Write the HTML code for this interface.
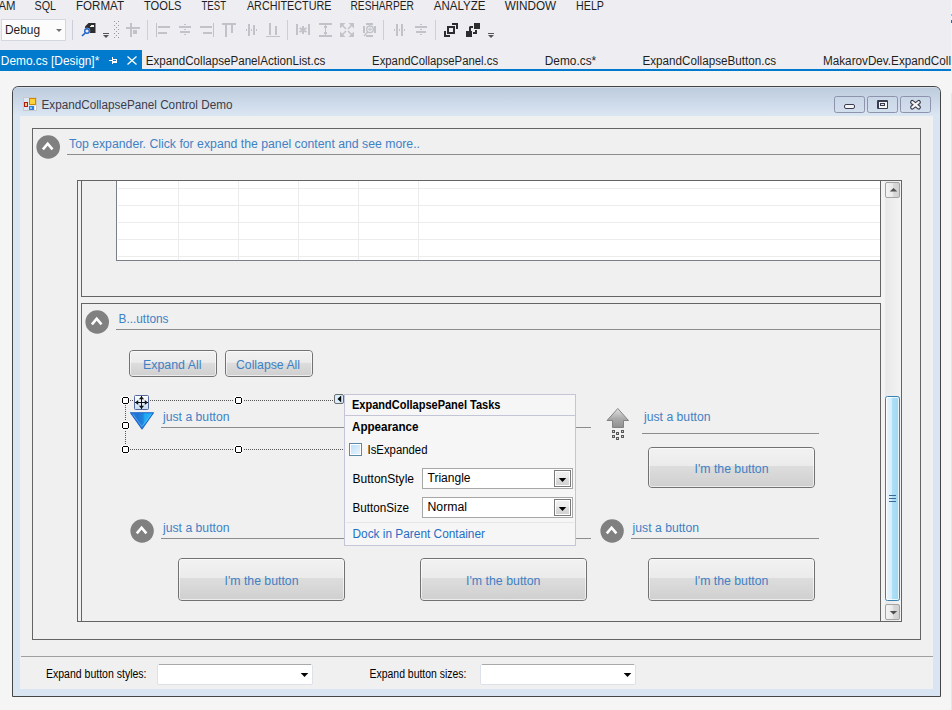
<!DOCTYPE html><html><head><meta charset="utf-8"><title>ExpandCollapsePanel Designer</title><style>html,body{margin:0;padding:0;width:952px;height:710px;overflow:hidden;background:#f5f5f5;font-family:"Liberation Sans",sans-serif}rect{shape-rendering:crispEdges}rect[rx]{shape-rendering:geometricPrecision}</style></head><body><svg width="952" height="710" viewBox="0 0 952 710" style="position:absolute;left:0;top:0;display:block" shape-rendering="auto"><defs><linearGradient id="title" x1="0" y1="0" x2="0" y2="1"><stop offset="0" stop-color="#bccbdd"/><stop offset="1" stop-color="#dbe6f3"/></linearGradient><linearGradient id="capbtn" x1="0" y1="0" x2="0" y2="1"><stop offset="0" stop-color="#c9d6e5"/><stop offset="1" stop-color="#d3dfed"/></linearGradient><linearGradient id="track" x1="0" y1="0" x2="1" y2="0"><stop offset="0" stop-color="#e9e9e9"/><stop offset="1" stop-color="#f2f2f2"/></linearGradient><linearGradient id="sbtn" x1="0" y1="0" x2="1" y2="0"><stop offset="0" stop-color="#f4f4f4"/><stop offset="0.5" stop-color="#e9e9e9"/><stop offset="0.55" stop-color="#d9d9d9"/><stop offset="1" stop-color="#d0d0d0"/></linearGradient><linearGradient id="thumb" x1="0" y1="0" x2="1" y2="0"><stop offset="0" stop-color="#ecf7fd"/><stop offset="0.45" stop-color="#d6edfb"/><stop offset="0.5" stop-color="#ade0f8"/><stop offset="1" stop-color="#9fd6f3"/></linearGradient><linearGradient id="btn" x1="0" y1="0" x2="0" y2="1"><stop offset="0" stop-color="#f2f2f2"/><stop offset="0.46" stop-color="#ebebeb"/><stop offset="0.47" stop-color="#dddddd"/><stop offset="1" stop-color="#cfcfcf"/></linearGradient><linearGradient id="mv" x1="0" y1="0" x2="0" y2="1"><stop offset="0" stop-color="#ffffff"/><stop offset="1" stop-color="#c6dcf2"/></linearGradient><linearGradient id="tri" x1="0" y1="0" x2="1" y2="0"><stop offset="0" stop-color="#2a86dc"/><stop offset="0.3" stop-color="#1f72d4"/><stop offset="0.55" stop-color="#2087de"/><stop offset="0.62" stop-color="#1eaaf4"/><stop offset="1" stop-color="#22b4f8"/></linearGradient><linearGradient id="arr" x1="0" y1="0" x2="1" y2="0"><stop offset="0" stop-color="#d0d0d0"/><stop offset="0.5" stop-color="#a8a8a8"/><stop offset="1" stop-color="#8a8a8a"/></linearGradient><linearGradient id="arrv" x1="0" y1="0" x2="0" y2="1"><stop offset="0" stop-color="#e2e2e2"/><stop offset="0.55" stop-color="#a9a9a9"/><stop offset="1" stop-color="#8f8f8f"/></linearGradient><linearGradient id="chk" x1="0" y1="0" x2="1" y2="1"><stop offset="0" stop-color="#bfe0f8"/><stop offset="1" stop-color="#e6f4fc"/></linearGradient><linearGradient id="dd" x1="0" y1="0" x2="0" y2="1"><stop offset="0" stop-color="#f0f0f0"/><stop offset="0.45" stop-color="#ebebeb"/><stop offset="0.5" stop-color="#dedede"/><stop offset="1" stop-color="#d2d2d2"/></linearGradient></defs><rect x="0" y="0" width="952" height="71" fill="#eeeef2" />
<rect x="0" y="71" width="952" height="639" fill="#f5f5f5" />
<text x="-1.5" y="10" font-family="Liberation Sans" font-size="12" fill="#1e1e1e" font-weight="normal" textLength="17" lengthAdjust="spacingAndGlyphs" >AM</text>
<text x="34.5" y="10" font-family="Liberation Sans" font-size="12" fill="#1e1e1e" font-weight="normal" textLength="21.5" lengthAdjust="spacingAndGlyphs" >SQL</text>
<text x="76.0" y="10" font-family="Liberation Sans" font-size="12" fill="#1e1e1e" font-weight="normal" textLength="48.0" lengthAdjust="spacingAndGlyphs" >FORMAT</text>
<text x="144.0" y="10" font-family="Liberation Sans" font-size="12" fill="#1e1e1e" font-weight="normal" textLength="37.5" lengthAdjust="spacingAndGlyphs" >TOOLS</text>
<text x="201.5" y="10" font-family="Liberation Sans" font-size="12" fill="#1e1e1e" font-weight="normal" textLength="24.5" lengthAdjust="spacingAndGlyphs" >TEST</text>
<text x="246.9" y="10" font-family="Liberation Sans" font-size="12" fill="#1e1e1e" font-weight="normal" textLength="84.6" lengthAdjust="spacingAndGlyphs" >ARCHITECTURE</text>
<text x="350.5" y="10" font-family="Liberation Sans" font-size="12" fill="#1e1e1e" font-weight="normal" textLength="63.3" lengthAdjust="spacingAndGlyphs" >RESHARPER</text>
<text x="433.8" y="10" font-family="Liberation Sans" font-size="12" fill="#1e1e1e" font-weight="normal" textLength="51.7" lengthAdjust="spacingAndGlyphs" >ANALYZE</text>
<text x="504.7" y="10" font-family="Liberation Sans" font-size="12" fill="#1e1e1e" font-weight="normal" textLength="51.4" lengthAdjust="spacingAndGlyphs" >WINDOW</text>
<text x="576.1" y="10" font-family="Liberation Sans" font-size="12" fill="#1e1e1e" font-weight="normal" textLength="27.9" lengthAdjust="spacingAndGlyphs" >HELP</text>
<rect x="1" y="19" width="65" height="22" fill="#d5d7e0" />
<rect x="2" y="20" width="63" height="20" fill="#fcfcfc" />
<text x="5" y="34" font-family="Liberation Sans" font-size="12.5" fill="#1e1e1e" font-weight="normal" textLength="35" lengthAdjust="spacingAndGlyphs" >Debug</text>
<polygon points="56,29 62,29 59,32" fill="#717171"/>
<rect x="72" y="20" width="1" height="20" fill="#ccceDB" />
<rect x="147" y="20" width="1" height="20" fill="#ccceDB" />
<rect x="287" y="20" width="1" height="20" fill="#ccceDB" />
<rect x="383" y="20" width="1" height="20" fill="#ccceDB" />
<rect x="435" y="20" width="1" height="20" fill="#ccceDB" />
<path d="M85,26.5 L88.5,23 H95.5 V33 H85 Z" fill="#2d2d30"/>
<rect x="91" y="25" width="3" height="1.5" fill="#eeeef2"/><rect x="90" y="25.5" width="1" height="1" fill="#eeeef2"/>
<circle cx="87" cy="31" r="3.2" fill="#eeeef2"/>
<circle cx="87" cy="31" r="2.3" fill="none" stroke="#1e62c8" stroke-width="1.4"/>
<line x1="85.2" y1="33" x2="82" y2="36" stroke="#1e62c8" stroke-width="1.7"/>
<rect x="103" y="33" width="6" height="1" fill="#555" />
<polygon points="103,35 109,35 106,38" fill="#555"/>
<rect x="488" y="33" width="6" height="1" fill="#555" />
<polygon points="488,35 494,35 491,38" fill="#555"/>
<rect x="114" y="21" width="1" height="1" fill="#999" />
<rect x="118" y="21" width="1" height="1" fill="#999" />
<rect x="114" y="25" width="1" height="1" fill="#999" />
<rect x="118" y="25" width="1" height="1" fill="#999" />
<rect x="114" y="29" width="1" height="1" fill="#999" />
<rect x="118" y="29" width="1" height="1" fill="#999" />
<rect x="114" y="33" width="1" height="1" fill="#999" />
<rect x="118" y="33" width="1" height="1" fill="#999" />
<rect x="114" y="37" width="1" height="1" fill="#999" />
<rect x="118" y="37" width="1" height="1" fill="#999" />
<rect x="116" y="23" width="1" height="1" fill="#999" />
<rect x="116" y="27" width="1" height="1" fill="#999" />
<rect x="116" y="31" width="1" height="1" fill="#999" />
<rect x="116" y="35" width="1" height="1" fill="#999" />
<rect x="126" y="27" width="14" height="2" fill="#c2c3c9" />
<rect x="130" y="23" width="2" height="14" fill="#c2c3c9" />
<rect x="133" y="30" width="4" height="4" fill="#c2c3c9" />
<rect x="156" y="23" width="1" height="14" fill="#c2c3c9" />
<rect x="158" y="26" width="12" height="2" fill="#c2c3c9" />
<rect x="158" y="32" width="9" height="2" fill="#c2c3c9" />
<rect x="179" y="26" width="12" height="2" fill="#c2c3c9" />
<rect x="180" y="31" width="10" height="2" fill="#c2c3c9" />
<rect x="184" y="24" width="2" height="1" fill="#c2c3c9" />
<rect x="184" y="29" width="2" height="1" fill="#c2c3c9" />
<rect x="184" y="34" width="2" height="1" fill="#c2c3c9" />
<rect x="200" y="26" width="12" height="2" fill="#c2c3c9" />
<rect x="203" y="32" width="9" height="2" fill="#c2c3c9" />
<rect x="213" y="23" width="1" height="14" fill="#c2c3c9" />
<rect x="222" y="23" width="14" height="2" fill="#c2c3c9" />
<rect x="225" y="25" width="2" height="12" fill="#c2c3c9" />
<rect x="231" y="25" width="2" height="8" fill="#c2c3c9" />
<rect x="248" y="24" width="2" height="12" fill="#c2c3c9" />
<rect x="253" y="25" width="2" height="10" fill="#c2c3c9" />
<rect x="246" y="29" width="1" height="2" fill="#c2c3c9" />
<rect x="251" y="29" width="1" height="2" fill="#c2c3c9" />
<rect x="256" y="29" width="1" height="2" fill="#c2c3c9" />
<rect x="266" y="36" width="14" height="1" fill="#c2c3c9" />
<rect x="269" y="23" width="2" height="12" fill="#c2c3c9" />
<rect x="275" y="26" width="2" height="9" fill="#c2c3c9" />
<rect x="296" y="24" width="2" height="11" fill="#c2c3c9" />
<rect x="308" y="24" width="2" height="11" fill="#c2c3c9" />
<path d="M303,26 V34 M299.5,28 L306.5,32 M306.5,28 L299.5,32" stroke="#c2c3c9" stroke-width="2"/>
<rect x="319" y="23" width="13" height="2" fill="#c2c3c9" />
<rect x="319" y="35" width="13" height="2" fill="#c2c3c9" />
<rect x="325" y="25" width="1" height="10" fill="#c2c3c9" />
<rect x="324" y="26" width="3" height="2" fill="#c2c3c9" />
<rect x="324" y="32" width="3" height="2" fill="#c2c3c9" />
<path d="M342,25 L346,29 M348,31 L352,35 M352,25 L348,29 M346,31 L342,35" stroke="#c2c3c9" stroke-width="1.6"/>
<path d="M340,23 h5.5 l-5.5,5.5 z M354,23 h-5.5 l5.5,5.5 z M340,37 h5.5 l-5.5,-5.5 z M354,37 h-5.5 l5.5,-5.5 z" fill="#c2c3c9"/>
<rect x="366" y="23" width="7" height="2" fill="#c2c3c9" />
<rect x="366" y="35" width="7" height="2" fill="#c2c3c9" />
<rect x="363" y="26" width="2" height="7" fill="#c2c3c9" />
<rect x="374" y="26" width="2" height="7" fill="#c2c3c9" />
<circle cx="370" cy="29.3" r="3.3" fill="none" stroke="#c2c3c9" stroke-width="1.4"/>
<path d="M370,27.3 V31.3 M368,29.3 H372" stroke="#c2c3c9" stroke-width="1"/>
<line x1="367.6" y1="32" x2="364" y2="36" stroke="#c2c3c9" stroke-width="1.3"/>
<rect x="396" y="24" width="2" height="12" fill="#c2c3c9" />
<rect x="401" y="24" width="2" height="12" fill="#c2c3c9" />
<rect x="394" y="29" width="1" height="2" fill="#c2c3c9" />
<rect x="399" y="29" width="1" height="2" fill="#c2c3c9" />
<rect x="404" y="29" width="1" height="2" fill="#c2c3c9" />
<rect x="415" y="26" width="12" height="2" fill="#c2c3c9" />
<rect x="416" y="31" width="10" height="2" fill="#c2c3c9" />
<rect x="420" y="24" width="2" height="1" fill="#c2c3c9" />
<rect x="420" y="29" width="2" height="1" fill="#c2c3c9" />
<rect x="420" y="34" width="2" height="1" fill="#c2c3c9" />
<path d="M447,26 h8 v8 h-8 z M449,28 v4 h4 v-4 z" fill="#2d2d30" fill-rule="evenodd"/>
<path d="M452,23 h6 v6 h-2 v-4 h-4 z M444,31 h2 v4 h4 v2 h-6 z" fill="#2d2d30"/>
<path d="M474,23 h6 v6 h-6 z M466,31 h6 v6 h-6 z" fill="#2d2d30"/>
<path d="M470,26 h3 v2 h-2 v3 h-2 v-4 z M475,30 h2 v4 h-4 v-2 h2 z" fill="#2d2d30"/>
<rect x="0" y="69" width="951" height="2" fill="#007acc" />
<rect x="0" y="50" width="142" height="21" fill="#007acc" />
<text x="0.8" y="65" font-family="Liberation Sans" font-size="12.5" fill="#ffffff" font-weight="normal" textLength="98.5" lengthAdjust="spacingAndGlyphs" >Demo.cs [Design]*</text>
<rect x="109" y="60" width="4" height="1" fill="#fff" />
<rect x="112" y="57" width="1" height="7" fill="#fff" />
<rect x="112" y="59" width="5" height="1" fill="#fff" />
<rect x="112" y="61" width="5" height="2" fill="#fff" />
<rect x="116" y="59" width="1" height="4" fill="#fff" />
<path d="M127.5,56.5 L136.5,64.5 M136.5,56.5 L127.5,64.5" stroke="#fff" stroke-width="1.3"/>
<text x="145.8" y="65" font-family="Liberation Sans" font-size="12.5" fill="#1e1e1e" font-weight="normal" textLength="179.6" lengthAdjust="spacingAndGlyphs" >ExpandCollapsePanelActionList.cs</text>
<text x="372.1" y="65" font-family="Liberation Sans" font-size="12.5" fill="#1e1e1e" font-weight="normal" textLength="126.0" lengthAdjust="spacingAndGlyphs" >ExpandCollapsePanel.cs</text>
<text x="544.8" y="65" font-family="Liberation Sans" font-size="12.5" fill="#1e1e1e" font-weight="normal" textLength="51.4" lengthAdjust="spacingAndGlyphs" >Demo.cs*</text>
<text x="642.5" y="65" font-family="Liberation Sans" font-size="12.5" fill="#1e1e1e" font-weight="normal" textLength="133.6" lengthAdjust="spacingAndGlyphs" >ExpandCollapseButton.cs</text>
<text x="823" y="65" font-family="Liberation Sans" font-size="12.5" fill="#1e1e1e" font-weight="normal" textLength="128" lengthAdjust="spacingAndGlyphs" >MakarovDev.ExpandColl</text>
<rect x="951" y="93" width="1" height="617" fill="#e6e6e6" />
<rect x="951" y="0" width="1" height="69" fill="#f3f3f6" />
<rect x="951" y="14" width="1" height="2" fill="#7cc6f2" />
<rect x="951" y="20" width="1" height="3" fill="#0a72c8" />
<path d="M12.5,696.5 V93 Q12.5,86.5 19,86.5 H934 Q940.5,86.5 940.5,93 V696.5 Z" fill="#d9e5f3" stroke="#454545" stroke-width="1"/>
<path d="M13,116 V93 Q13,87 19,87 H934 Q940,87 940,93 V116 Z" fill="url(#title)"/>
<rect x="18" y="87" width="917" height="1" fill="#d3dde8" />
<rect x="13" y="116" width="927" height="580" fill="#d9e5f3" />
<rect x="20" y="116" width="913" height="573" fill="#f0f0f0" />
<rect x="23" y="97" width="14" height="14" fill="#c9c9c9" />
<rect x="24" y="98" width="12" height="12" fill="#dfe8f2" />
<rect x="23" y="103" width="1" height="1" fill="#c9c9c9" />
<rect x="24" y="102" width="4" height="5" fill="#b8180e" />
<rect x="25" y="103" width="2" height="3" fill="#f0c890" />
<rect x="29" y="98" width="7" height="7" fill="#c98a00" />
<rect x="30" y="99" width="5" height="5" fill="#ffd23a" />
<rect x="29" y="106" width="5" height="4" fill="#2f7fdc" />
<rect x="30" y="107" width="2" height="2" fill="#8ec0f5" />
<rect x="35" y="106" width="1" height="4" fill="#ffffff" />
<text x="41.5" y="109" font-family="Liberation Sans" font-size="12.5" fill="#3c3c4a" font-weight="normal" textLength="191" lengthAdjust="spacingAndGlyphs" >ExpandCollapsePanel Control Demo</text>
<rect x="834.5" y="96.5" width="30" height="16" rx="2" fill="url(#capbtn)" stroke="#8d92ad" stroke-width="1"/>
<rect x="867.5" y="96.5" width="30" height="16" rx="2" fill="url(#capbtn)" stroke="#8d92ad" stroke-width="1"/>
<rect x="900.5" y="96.5" width="30" height="16" rx="2" fill="url(#capbtn)" stroke="#8d92ad" stroke-width="1"/>
<rect x="844.5" y="104.5" width="10" height="4" rx="1.5" fill="#f4f4f4" stroke="#3c3c50" stroke-width="1"/>
<rect x="877" y="100" width="11" height="9" rx="1" fill="#3c3c50"/><rect x="878.5" y="101.5" width="8" height="6" fill="#f4f4f4"/>
<rect x="880" y="103" width="5" height="3" fill="#3c3c50"/><rect x="881" y="104" width="3" height="1" fill="#dfe6ee"/>
<path d="M912.3,102.2 L918.7,107.3 M918.7,102.2 L912.3,107.3" stroke="#3c3c50" stroke-width="4.4" stroke-linecap="round"/>
<path d="M912.3,102.2 L918.7,107.3 M918.7,102.2 L912.3,107.3" stroke="#f4f4f4" stroke-width="2.2" stroke-linecap="round"/>
<rect x="32" y="128" width="889" height="1" fill="#646464" />
<rect x="32" y="639" width="889" height="1" fill="#646464" />
<rect x="32" y="128" width="1" height="512" fill="#646464" />
<rect x="920" y="128" width="1" height="512" fill="#646464" />
<circle cx="48.2" cy="147" r="11.8" fill="#808080"/>
<path d="M42.90,149.30 L47.70,143.70 L52.50,149.30" stroke="#fff" stroke-width="2.6" fill="none"/>
<text x="69" y="148" font-family="Liberation Sans" font-size="12.5" fill="#3f81c5" font-weight="normal" textLength="351" lengthAdjust="spacingAndGlyphs" >Top expander. Click for expand the panel content and see more..</text>
<rect x="67" y="154" width="853" height="1" fill="#8c8c8c" />
<rect x="77" y="180" width="825" height="1" fill="#646464" />
<rect x="77" y="621" width="825" height="1" fill="#646464" />
<rect x="77" y="180" width="1" height="442" fill="#646464" />
<rect x="901" y="180" width="1" height="442" fill="#646464" />
<rect x="81" y="180" width="800" height="1" fill="#646464" />
<rect x="81" y="296" width="800" height="1" fill="#646464" />
<rect x="81" y="180" width="1" height="117" fill="#646464" />
<rect x="880" y="180" width="1" height="117" fill="#646464" />
<rect x="117" y="181" width="763" height="79" fill="#ffffff" />
<rect x="116" y="181" width="1" height="80" fill="#7a808a" />
<rect x="116" y="260" width="764" height="1" fill="#7a808a" />
<rect x="118" y="188" width="762" height="1" fill="#ececec" />
<rect x="118" y="205" width="762" height="1" fill="#ececec" />
<rect x="118" y="222" width="762" height="1" fill="#ececec" />
<rect x="118" y="239" width="762" height="1" fill="#ececec" />
<rect x="118" y="256" width="762" height="1" fill="#ececec" />
<rect x="178" y="181" width="1" height="79" fill="#ececec" />
<rect x="238" y="181" width="1" height="79" fill="#ececec" />
<rect x="298" y="181" width="1" height="79" fill="#ececec" />
<rect x="358" y="181" width="1" height="79" fill="#ececec" />
<rect x="418" y="181" width="1" height="79" fill="#ececec" />
<rect x="881" y="181" width="20" height="440" fill="#f3f3f3" />
<rect x="885" y="181" width="15" height="440" fill="url(#track)" />
<rect x="885.5" y="182.5" width="14" height="15" rx="1.5" fill="url(#sbtn)" stroke="#a3a3a3"/>
<polygon points="889.8,191.5 897.2,191.5 893.5,188" fill="#505050"/>
<rect x="885.5" y="604.5" width="14" height="15" rx="1.5" fill="url(#sbtn)" stroke="#a3a3a3"/>
<polygon points="889.8,611 897.2,611 893.5,614.5" fill="#505050"/>
<rect x="885.5" y="396.5" width="14" height="204" rx="2" fill="url(#thumb)" stroke="#3c7fb1"/>
<rect x="886.5" y="397.5" width="12" height="202" rx="1" fill="none" stroke="#ffffff" stroke-opacity="0.75"/>
<rect x="889" y="495" width="7" height="1" fill="#3a6a94" />
<rect x="889" y="498" width="7" height="1" fill="#3a6a94" />
<rect x="889" y="501" width="7" height="1" fill="#3a6a94" />
<rect x="81" y="303" width="800" height="1" fill="#646464" />
<rect x="81" y="303" width="1" height="318" fill="#646464" />
<rect x="880" y="303" width="1" height="318" fill="#646464" />
<circle cx="97.2" cy="322" r="11.8" fill="#808080"/>
<path d="M91.90,324.30 L96.70,318.70 L101.50,324.30" stroke="#fff" stroke-width="2.6" fill="none"/>
<text x="118.5" y="323" font-family="Liberation Sans" font-size="12.5" fill="#3f81c5" font-weight="normal" textLength="50" lengthAdjust="spacingAndGlyphs" >B...uttons</text>
<rect x="116" y="329" width="764" height="1" fill="#8c8c8c" />
<rect x="129.5" y="350.5" width="87" height="26" rx="3.5" fill="url(#btn)" stroke="#727272" stroke-width="1"/>
<rect x="130.5" y="351.5" width="85" height="24" rx="2" fill="none" stroke="#ffffff" stroke-opacity="0.6"/>
<text x="143" y="369" font-family="Liberation Sans" font-size="12.5" fill="#3f81c5" font-weight="normal" textLength="58.5" lengthAdjust="spacingAndGlyphs" >Expand All</text>
<rect x="225.5" y="350.5" width="87" height="26" rx="3.5" fill="url(#btn)" stroke="#727272" stroke-width="1"/>
<rect x="226.5" y="351.5" width="85" height="24" rx="2" fill="none" stroke="#ffffff" stroke-opacity="0.6"/>
<text x="236" y="369" font-family="Liberation Sans" font-size="12.5" fill="#3f81c5" font-weight="normal" textLength="64" lengthAdjust="spacingAndGlyphs" >Collapse All</text>
<g stroke="#555" stroke-width="1" stroke-dasharray="1,1" fill="none" shape-rendering="crispEdges"><line x1="130" y1="400.5" x2="334" y2="400.5"/><line x1="130" y1="449.5" x2="344" y2="449.5"/><line x1="125.5" y1="405" x2="125.5" y2="445"/></g>
<rect x="121" y="397" width="9" height="7" fill="#fbfbfb" />
<rect x="122" y="396" width="7" height="9" fill="#fbfbfb" />
<rect x="123" y="398" width="5" height="5" fill="#ffffff" />
<rect x="123" y="397" width="5" height="1" fill="#000" />
<rect x="123" y="403" width="5" height="1" fill="#000" />
<rect x="122" y="398" width="1" height="5" fill="#000" />
<rect x="128" y="398" width="1" height="5" fill="#000" />
<rect x="121" y="422" width="9" height="7" fill="#fbfbfb" />
<rect x="122" y="421" width="7" height="9" fill="#fbfbfb" />
<rect x="123" y="423" width="5" height="5" fill="#ffffff" />
<rect x="123" y="422" width="5" height="1" fill="#000" />
<rect x="123" y="428" width="5" height="1" fill="#000" />
<rect x="122" y="423" width="1" height="5" fill="#000" />
<rect x="128" y="423" width="1" height="5" fill="#000" />
<rect x="121" y="446" width="9" height="7" fill="#fbfbfb" />
<rect x="122" y="445" width="7" height="9" fill="#fbfbfb" />
<rect x="123" y="447" width="5" height="5" fill="#ffffff" />
<rect x="123" y="446" width="5" height="1" fill="#000" />
<rect x="123" y="452" width="5" height="1" fill="#000" />
<rect x="122" y="447" width="1" height="5" fill="#000" />
<rect x="128" y="447" width="1" height="5" fill="#000" />
<rect x="234" y="397" width="9" height="7" fill="#fbfbfb" />
<rect x="235" y="396" width="7" height="9" fill="#fbfbfb" />
<rect x="236" y="398" width="5" height="5" fill="#ffffff" />
<rect x="236" y="397" width="5" height="1" fill="#000" />
<rect x="236" y="403" width="5" height="1" fill="#000" />
<rect x="235" y="398" width="1" height="5" fill="#000" />
<rect x="241" y="398" width="1" height="5" fill="#000" />
<rect x="234" y="446" width="9" height="7" fill="#fbfbfb" />
<rect x="235" y="445" width="7" height="9" fill="#fbfbfb" />
<rect x="236" y="447" width="5" height="5" fill="#ffffff" />
<rect x="236" y="446" width="5" height="1" fill="#000" />
<rect x="236" y="452" width="5" height="1" fill="#000" />
<rect x="235" y="447" width="1" height="5" fill="#000" />
<rect x="241" y="447" width="1" height="5" fill="#000" />
<rect x="134.5" y="395.5" width="14" height="14" rx="1" fill="url(#mv)" stroke="#54699a"/>
<path d="M141.5,396 V409 M135,402.5 H148" stroke="#111" stroke-width="1"/>
<path d="M141.5,396.2 l-2.6,3 h5.2 z M141.5,408.8 l-2.6,-3 h5.2 z M135.2,402.5 l3,-2.6 v5.2 z M147.8,402.5 l-3,-2.6 v5.2 z" fill="#111"/>
<polygon points="130.5,412.8 153.5,412.8 142,429" fill="url(#tri)" stroke="#1a63cc" stroke-width="1.1" stroke-linejoin="round"/>
<polyline points="133,414.5 142,426.5 151,414.5" stroke="#7fc8f6" stroke-width="0.7" fill="none" stroke-opacity="0.8"/>
<text x="163" y="420.6" font-family="Liberation Sans" font-size="12.5" fill="#3f81c5" font-weight="normal" textLength="66.5" lengthAdjust="spacingAndGlyphs" >just a button</text>
<rect x="161" y="427" width="430" height="1" fill="#8c8c8c" />
<rect x="334.5" y="394.5" width="9" height="9" rx="1.5" fill="#d8eefc" stroke="#6e6e6e"/>
<polygon points="337.5,399 341.2,395.6 341.2,402.4" fill="#000"/>
<polygon points="607,420.5 617.8,408.5 628.5,420.5 623.5,420.5 623.5,427.5 612.5,427.5 612.5,420.5" fill="url(#arrv)" stroke="#7a7a7a" stroke-width="0.9"/>
<rect x="612" y="430" width="3" height="3" fill="#5a5a5a" />
<rect x="613" y="431" width="1" height="1" fill="#d0d0d0" />
<rect x="612" y="435" width="3" height="3" fill="#5a5a5a" />
<rect x="613" y="436" width="1" height="1" fill="#d0d0d0" />
<rect x="616" y="432" width="3" height="3" fill="#5a5a5a" />
<rect x="617" y="433" width="1" height="1" fill="#d0d0d0" />
<rect x="616" y="437" width="3" height="3" fill="#5a5a5a" />
<rect x="617" y="438" width="1" height="1" fill="#d0d0d0" />
<rect x="621" y="430" width="3" height="3" fill="#5a5a5a" />
<rect x="622" y="431" width="1" height="1" fill="#d0d0d0" />
<rect x="621" y="435" width="3" height="3" fill="#5a5a5a" />
<rect x="622" y="436" width="1" height="1" fill="#d0d0d0" />
<text x="644" y="420.7" font-family="Liberation Sans" font-size="12.5" fill="#3f81c5" font-weight="normal" textLength="66.5" lengthAdjust="spacingAndGlyphs" >just a button</text>
<rect x="642" y="433" width="177" height="1" fill="#8c8c8c" />
<rect x="648.5" y="447.5" width="166" height="40" rx="3.5" fill="url(#btn)" stroke="#727272" stroke-width="1"/>
<rect x="649.5" y="448.5" width="164" height="38" rx="2" fill="none" stroke="#ffffff" stroke-opacity="0.6"/>
<text x="694.5" y="473" font-family="Liberation Sans" font-size="12.5" fill="#3f81c5" font-weight="normal" textLength="74" lengthAdjust="spacingAndGlyphs" >I'm the button</text>
<circle cx="142.1" cy="531" r="11.7" fill="#808080"/>
<path d="M136.80,533.30 L141.60,527.70 L146.40,533.30" stroke="#fff" stroke-width="2.6" fill="none"/>
<text x="163" y="532.2" font-family="Liberation Sans" font-size="12.5" fill="#3f81c5" font-weight="normal" textLength="66.5" lengthAdjust="spacingAndGlyphs" >just a button</text>
<rect x="161" y="538" width="430" height="1" fill="#8c8c8c" />
<circle cx="612.1" cy="531" r="11.7" fill="#808080"/>
<path d="M606.80,533.30 L611.60,527.70 L616.40,533.30" stroke="#fff" stroke-width="2.6" fill="none"/>
<text x="632.6" y="532.2" font-family="Liberation Sans" font-size="12.5" fill="#3f81c5" font-weight="normal" textLength="66.5" lengthAdjust="spacingAndGlyphs" >just a button</text>
<rect x="631" y="538" width="188" height="1" fill="#8c8c8c" />
<rect x="178.5" y="558.5" width="166" height="42" rx="3.5" fill="url(#btn)" stroke="#727272" stroke-width="1"/>
<rect x="179.5" y="559.5" width="164" height="40" rx="2" fill="none" stroke="#ffffff" stroke-opacity="0.6"/>
<text x="224.5" y="584.5" font-family="Liberation Sans" font-size="12.5" fill="#3f81c5" font-weight="normal" textLength="74" lengthAdjust="spacingAndGlyphs" >I'm the button</text>
<rect x="420.5" y="558.5" width="166" height="42" rx="3.5" fill="url(#btn)" stroke="#727272" stroke-width="1"/>
<rect x="421.5" y="559.5" width="164" height="40" rx="2" fill="none" stroke="#ffffff" stroke-opacity="0.6"/>
<text x="466" y="584.5" font-family="Liberation Sans" font-size="12.5" fill="#3f81c5" font-weight="normal" textLength="74.5" lengthAdjust="spacingAndGlyphs" >I'm the button</text>
<rect x="648.5" y="558.5" width="166" height="42" rx="3.5" fill="url(#btn)" stroke="#727272" stroke-width="1"/>
<rect x="649.5" y="559.5" width="164" height="40" rx="2" fill="none" stroke="#ffffff" stroke-opacity="0.6"/>
<text x="694.4" y="584.5" font-family="Liberation Sans" font-size="12.5" fill="#3f81c5" font-weight="normal" textLength="74" lengthAdjust="spacingAndGlyphs" >I'm the button</text>
<rect x="344" y="394" width="232" height="152" fill="#c5c5d8" />
<rect x="345" y="395" width="230" height="150" fill="#f6f6f6" />
<rect x="345" y="415" width="230" height="1" fill="#c5c5d8" />
<text x="352" y="408.7" font-family="Liberation Sans" font-size="12.5" fill="#000" font-weight="bold" textLength="148.5" lengthAdjust="spacingAndGlyphs" >ExpandCollapsePanel Tasks</text>
<text x="352" y="430.8" font-family="Liberation Sans" font-size="12.5" fill="#000" font-weight="bold" textLength="66.5" lengthAdjust="spacingAndGlyphs" >Appearance</text>
<rect x="349.5" y="443.5" width="12" height="12" fill="#fff" stroke="#5a8aa6"/>
<rect x="351" y="445" width="9" height="9" fill="url(#chk)"/>
<text x="367.5" y="453.8" font-family="Liberation Sans" font-size="12.5" fill="#000" font-weight="normal" textLength="60" lengthAdjust="spacingAndGlyphs" >IsExpanded</text>
<text x="352.5" y="482.7" font-family="Liberation Sans" font-size="12.5" fill="#000" font-weight="normal" textLength="61.5" lengthAdjust="spacingAndGlyphs" >ButtonStyle</text>
<text x="352.5" y="511.7" font-family="Liberation Sans" font-size="12.5" fill="#000" font-weight="normal" textLength="56.5" lengthAdjust="spacingAndGlyphs" >ButtonSize</text>
<rect x="422" y="468" width="151" height="21" fill="#a7a7a7" />
<rect x="423" y="469" width="149" height="19" fill="#ffffff" />
<rect x="554" y="470" width="17" height="17" fill="#7a7a7a" />
<rect x="555" y="471" width="15" height="15" fill="#ffffff" />
<rect x="556" y="472" width="13" height="13" fill="url(#dd)" />
<polygon points="558.8,478 566.2,478 562.5,482" fill="#000"/>
<text x="427.5" y="482" font-family="Liberation Sans" font-size="12.5" fill="#000" font-weight="normal" textLength="43" lengthAdjust="spacingAndGlyphs" >Triangle</text>
<rect x="422" y="497" width="151" height="21" fill="#a7a7a7" />
<rect x="423" y="498" width="149" height="19" fill="#ffffff" />
<rect x="554" y="499" width="17" height="17" fill="#7a7a7a" />
<rect x="555" y="500" width="15" height="15" fill="#ffffff" />
<rect x="556" y="501" width="13" height="13" fill="url(#dd)" />
<polygon points="558.8,507 566.2,507 562.5,511" fill="#000"/>
<text x="427.5" y="511" font-family="Liberation Sans" font-size="12.5" fill="#000" font-weight="normal" textLength="39.5" lengthAdjust="spacingAndGlyphs" >Normal</text>
<rect x="346" y="522" width="228" height="1" fill="#e6e6e6" />
<text x="352.5" y="537.6" font-family="Liberation Sans" font-size="12.5" fill="#1f6fc5" font-weight="normal" textLength="132.5" lengthAdjust="spacingAndGlyphs" >Dock in Parent Container</text>
<rect x="21" y="656" width="912" height="1" fill="#a0a0a0" />
<text x="46" y="677.6" font-family="Liberation Sans" font-size="12" fill="#000" font-weight="normal" textLength="100.5" lengthAdjust="spacingAndGlyphs" >Expand button styles:</text>
<text x="369.5" y="677.6" font-family="Liberation Sans" font-size="12" fill="#000" font-weight="normal" textLength="97" lengthAdjust="spacingAndGlyphs" >Expand button sizes:</text>
<rect x="157.5" y="664.5" width="155" height="20" rx="1.5" fill="#ffffff" stroke="#dde2ea"/>
<rect x="159" y="664" width="152" height="1" fill="#a9a9a9" />
<polygon points="300.7,673 308.3,673 304.5,677" fill="#000"/>
<rect x="480.5" y="664.5" width="155" height="20" rx="1.5" fill="#ffffff" stroke="#dde2ea"/>
<rect x="482" y="664" width="152" height="1" fill="#a9a9a9" />
<polygon points="623.7,673 631.3,673 627.5,677" fill="#000"/></svg></body></html>
